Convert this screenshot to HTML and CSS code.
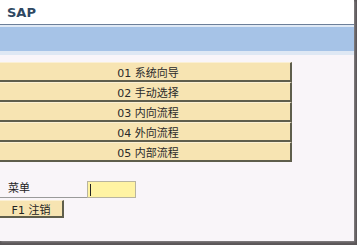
FILE: index.html
```html
<!DOCTYPE html>
<html lang="zh">
<head>
  <meta charset="UTF-8">
  <title>SAP</title>
  <link rel="stylesheet" href="styles.css">
</head>
<body>
  <div class="screen">
    <div class="header">
      <div class="logo">SAP</div>
    </div>
    <div class="toolbar"></div>
    <div class="subbar"></div>

    <div class="content">
      <div class="menu">
        <button class="menu-btn">01 系统向导</button>
        <button class="menu-btn">02 手动选择</button>
        <button class="menu-btn">03 内向流程</button>
        <button class="menu-btn">04 外向流程</button>
        <button class="menu-btn">05 内部流程</button>
      </div>

      <div class="field-row">
        <label class="field-label">菜单</label>
        <div class="field-input"><span class="caret"></span></div>
      </div>
      <button class="fkey">F1 注销</button>
    </div>
  </div>
</body>
</html>
```

FILE: styles.css
```css
body {
  margin: 0;
  width: 357px;
  height: 245px;
  overflow: hidden;
  background: #5a5658;
  font-family: "DejaVu Sans", "Noto Sans CJK SC", sans-serif;
}

.screen {
  width: 354px;
  height: 241px;
  background: #f9f5f9;
  box-shadow: 1px 1px 2px #8a8688;
}

.header {
  height: 24px;
  background: #ffffff;
  border-bottom: 1px solid #6c7f99;
  display: flex;
  align-items: center;
}

.logo {
  margin-left: 7px;
  margin-top: 1px;
  font-size: 13px;
  font-weight: bold;
  color: #2f4862;
}

.toolbar {
  height: 24px;
  background: #a6c3e7;
  border-top: 2px solid #dfe9f5;
}

.subbar {
  height: 4px;
  background: #dfe8f4;
}

.content {
  padding-top: 7px;
}

.menu {
  display: flex;
  flex-direction: column;
  width: 292px;
}

.menu-btn {
  height: 20px;
  padding: 0 0 0 6px;
  background: #f7e4b2;
  border: none;
  border-top: 1px solid #fbf0d4;
  border-bottom: 2px solid #5f5e4c;
  border-right: 2px solid #5f5e4c;
  font-family: "DejaVu Sans", "Noto Sans CJK SC", sans-serif;
  font-size: 11px;
  color: #2a2a2a;
  text-align: center;
}

.field-row {
  display: flex;
  align-items: flex-end;
  margin-top: 18px;
  height: 18px;
}

.field-label {
  width: 79px;
  padding-left: 8px;
  font-size: 11px;
  color: #222;
  border-bottom: 1px solid #9a9a9a;
  line-height: 16px;
}

.field-input {
  width: 45px;
  height: 15px;
  background: #fff3a3;
  border: 1px solid #b8b4a0;
  display: flex;
  align-items: center;
  padding-left: 2px;
}

.caret {
  width: 1px;
  height: 12px;
  background: #222;
}

.fkey {
  display: block;
  width: 64px;
  height: 18px;
  margin-top: 2px;
  padding: 0;
  background: #f7e4b2;
  border: none;
  border-top: 1px solid #fbf0d4;
  border-bottom: 2px solid #5f5e4c;
  border-right: 2px solid #5f5e4c;
  font-family: "DejaVu Sans", "Noto Sans CJK SC", sans-serif;
  font-size: 11px;
  color: #222;
}
```
